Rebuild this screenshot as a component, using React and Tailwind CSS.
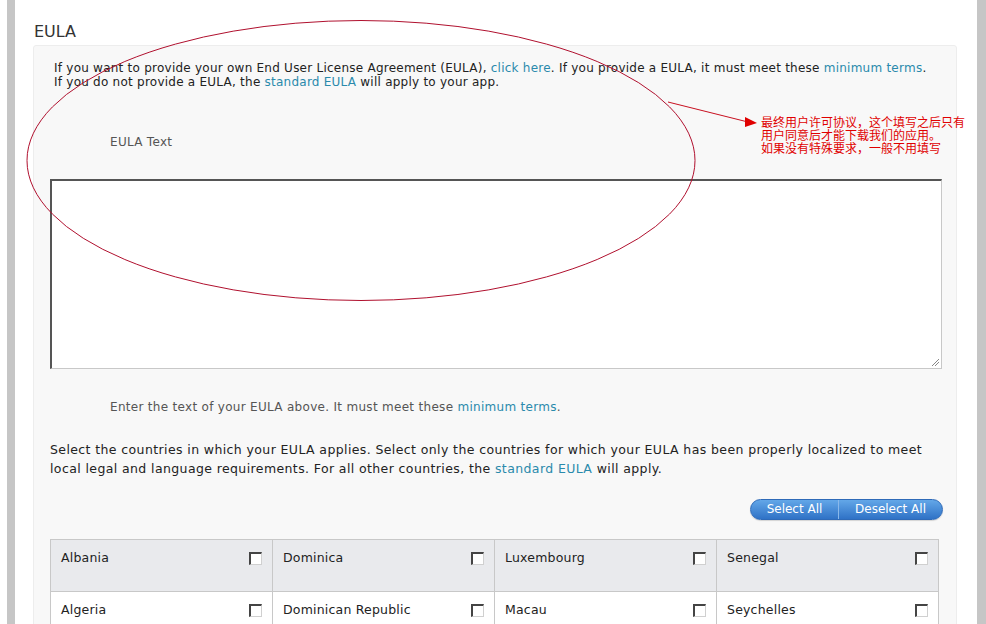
import React from "react";

const font = { fontFamily: '"DejaVu Sans", Verdana, sans-serif' };

const countries = [
  ["Albania", "Dominica", "Luxembourg", "Senegal"],
  ["Algeria", "Dominican Republic", "Macau", "Seychelles"],
];

function Check() {
  return (
    <span className="block w-[13px] h-[13px] bg-white border-t-2 border-l-2 border-b border-r border-t-[#444] border-l-[#444] border-b-[#d0d0d0] border-r-[#d0d0d0]" />
  );
}

function Link({ children }) {
  return <span className="text-[#2a8aac]">{children}</span>;
}

function Annotation() {
  // red ellipse + arrow + note drawn over the page
  return (
    <div className="absolute inset-0 pointer-events-none">
      <svg width="986" height="624" className="absolute left-0 top-0">
        <ellipse cx="361" cy="160.5" rx="334" ry="140" fill="none" stroke="#b0102e" strokeWidth="1" />
        <line x1="668" y1="102" x2="748" y2="122" stroke="#c81020" strokeWidth="1" />
        <polygon points="745,117 757,123 745,127" fill="#e00000" />
      </svg>
      <div
        className="absolute left-[761px] top-[115px] text-[12px] leading-[13px] text-[#e00000]"
        style={{ fontFamily: '"Noto Sans CJK SC", sans-serif' }}
      >
        <div>最终用户许可协议，这个填写之后只有</div>
        <div>用户同意后才能下载我们的应用。</div>
        <div>如果没有特殊要求，一般不用填写</div>
      </div>
    </div>
  );
}

export default function App() {
  return (
    <div className="relative w-[986px] h-[624px] overflow-hidden bg-white pl-[7px]" style={font}>
      <div className="h-full border-l-8 border-r-[9px] border-[#c6c6c6] bg-white pl-[18px] pr-[20px] pt-[22px]">
        <h2 className="pl-[1px] text-[16px] leading-[20px] text-[#333] font-normal">EULA</h2>

        {/* panel */}
        <div className="mt-[3px] h-[600px] bg-[#f8f8f8] border border-[#ededed] rounded-[3px] pl-[16px] pr-[14px] pt-[15px]">
          <p className="pl-[4px] text-[12px] leading-[14px] text-[#222] tracking-[0.24px]">
            If you want to provide your own End User License Agreement (EULA), <Link>click here</Link>. If you provide a EULA, it must meet these <Link>minimum terms</Link>.
            <br />
            If you do not provide a EULA, the <Link>standard EULA</Link> will apply to your app.
          </p>

          <div className="mt-[46px] pl-[60px] text-[12px] leading-[14px] text-[#555] tracking-[0.3px]">EULA Text</div>

          <div className="relative mt-[30px] h-[190px] bg-white border-t-2 border-l-2 border-b border-r border-t-[#555] border-l-[#555] border-b-[#c8c8c8] border-r-[#c8c8c8]">
            <svg width="10" height="10" className="absolute right-[1px] bottom-[1px]">
              <line x1="9" y1="2" x2="2" y2="9" stroke="#888" strokeWidth="1" />
              <line x1="9" y1="5" x2="5" y2="9" stroke="#888" strokeWidth="1" />
            </svg>
          </div>

          <div className="mt-[31px] pl-[60px] text-[12px] leading-[14px] text-[#555] tracking-[0.3px]">
            Enter the text of your EULA above. It must meet these <Link>minimum terms</Link>.
          </div>

          <p className="mt-[26px] text-[12.5px] leading-[19px] text-[#222] tracking-[0.39px]">
            Select the countries in which your EULA applies. Select only the countries for which your EULA has been properly localized to meet local legal and language requirements. For all other countries, the <Link>standard EULA</Link> will apply.
          </p>

          <div className="mt-[21px] flex justify-end -mr-[1px]">
            <div className="flex h-[21px] rounded-full overflow-hidden border border-[#2e6ab8] bg-gradient-to-b from-[#63a7e8] to-[#2f72c6] text-white text-[12px] leading-[19px] shadow-[0_1px_1px_rgba(0,0,0,0.15)]">
              <button className="w-[87px] text-center">Select All</button>
              <span className="w-px bg-[#8ab8ea]" />
              <button className="w-[103px] text-center">Deselect All</button>
            </div>
          </div>

          <div className="mt-[19px] mr-[3px] border-l border-t border-[#c8c8c8]">
            {countries.map((row, i) => (
              <div key={i} className={`grid grid-cols-4 ${i === 0 ? "bg-[#e9eaed] h-[52px]" : "bg-white h-[52px]"}`}>
                {row.map((c) => (
                  <div key={c} className="flex justify-between items-start border-r border-b border-[#c8c8c8] pl-[10px] pr-[10px] pt-[10px]">
                    <span className="text-[12.5px] leading-[16px] text-[#222] tracking-[0.2px]">{c}</span>
                    <span className="mt-[2px]"><Check /></span>
                  </div>
                ))}
              </div>
            ))}
          </div>
        </div>
      </div>
      <Annotation />
    </div>
  );
}
